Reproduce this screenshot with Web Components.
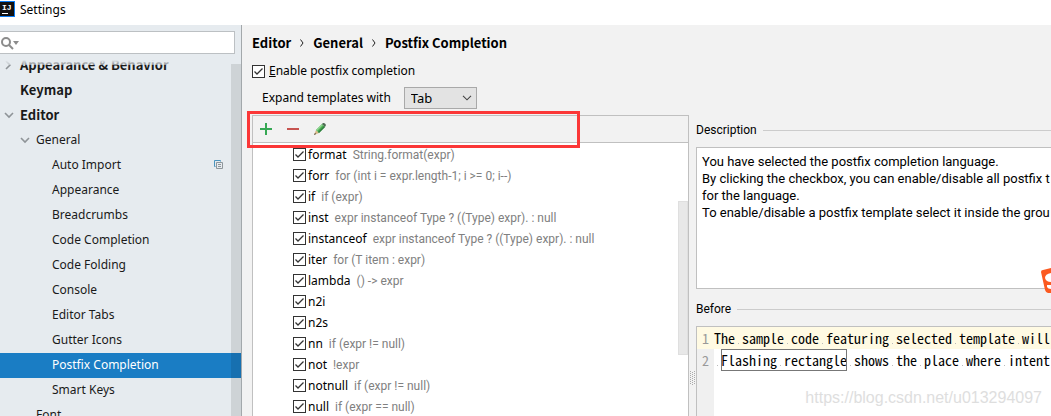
<!DOCTYPE html>
<html lang="en">
<head>
<meta charset="utf-8">
<title>Settings</title>
<style>
  html, body { height: 100%; }
  body {
    margin: 0;
    overflow: hidden;
    color: #111;
    font: 12px/20px "Noto Sans", "Open Sans", sans-serif;
    --heading-font: bold 13px/20px "Noto Sans CJK SC", "Noto Sans", sans-serif;
    --narrow-font: Roboto, "Liberation Sans", sans-serif;
    --code-font: "Noto Sans Mono CJK SC", "Liberation Mono", monospace;
    --line: #c0c0c0;
    --panel: #f2f2f2;
  }
</style>
</head>
<body>
<settings-window>
  <title-bar slot="title">Settings</title-bar>

  <settings-sidebar slot="sidebar">
    <tree-item level="0" state="closed">Appearance &amp; Behavior</tree-item>
    <tree-item level="0">Keymap</tree-item>
    <tree-item level="0" state="open">Editor</tree-item>
    <tree-item level="1" state="open">General</tree-item>
    <tree-item level="2" project>Auto Import</tree-item>
    <tree-item level="2">Appearance</tree-item>
    <tree-item level="2">Breadcrumbs</tree-item>
    <tree-item level="2">Code Completion</tree-item>
    <tree-item level="2">Code Folding</tree-item>
    <tree-item level="2">Console</tree-item>
    <tree-item level="2">Editor Tabs</tree-item>
    <tree-item level="2">Gutter Icons</tree-item>
    <tree-item level="2" selected>Postfix Completion</tree-item>
    <tree-item level="2">Smart Keys</tree-item>
    <tree-item level="1">Font</tree-item>
  </settings-sidebar>

  <bread-crumbs slot="header" path="Editor/General/Postfix Completion"></bread-crumbs>
  <postfix-options slot="header"></postfix-options>

  <template-panel slot="list">
    <template-row name="format" hint="String.format(expr)"></template-row>
    <template-row name="forr" hint="for (int i = expr.length-1; i &gt;= 0; i--)"></template-row>
    <template-row name="if" hint="if (expr)"></template-row>
    <template-row name="inst" hint="expr instanceof Type ? ((Type) expr). : null"></template-row>
    <template-row name="instanceof" hint="expr instanceof Type ? ((Type) expr). : null"></template-row>
    <template-row name="iter" hint="for (T item : expr)"></template-row>
    <template-row name="lambda" hint="() -&gt; expr"></template-row>
    <template-row name="n2i"></template-row>
    <template-row name="n2s"></template-row>
    <template-row name="nn" hint="if (expr != null)"></template-row>
    <template-row name="not" hint="!expr"></template-row>
    <template-row name="notnull" hint="if (expr != null)"></template-row>
    <template-row name="null" hint="if (expr == null)"></template-row>
  </template-panel>

  <preview-section slot="preview" label="Description">
    <description-box>You have selected the postfix completion language.<br>By clicking the checkbox, you can enable/disable all postfix t<br>for the language.<br>To enable/disable a postfix template select it inside the grou</description-box>
  </preview-section>
  <preview-section slot="preview" label="Before" grow>
    <code-sample></code-sample>
  </preview-section>

  <page-mark slot="overlay">https://blog.csdn.net/u013294097</page-mark>
</settings-window>

<script>
  class BaseElement extends HTMLElement {
    connectedCallback() {
      if (this.shadowRoot) return;
      this.attachShadow({ mode: "open" });
      this.shadowRoot.innerHTML = `
        <style>*, :host { box-sizing: border-box; } ${this.styles()}</style>
        ${this.render()}
      `;
    }

    styles() {
      return "";
    }

    render() {
      return "<slot></slot>";
    }
  }

  const CHECKBOX_STYLE = `
    input[type="checkbox"] {
      appearance: none;
      flex: none;
      width: 13px;
      height: 13px;
      margin: 0;
      border: 1px solid #333;
      background: #fff url("data:image/svg+xml,%3Csvg xmlns='http://www.w3.org/2000/svg' viewBox='0 0 11 11'%3E%3Cpath d='M1.5 5.5L4 8l5.5-5.5' fill='none' stroke='%23333' stroke-width='1.3'/%3E%3C/svg%3E") center / 11px 11px no-repeat;
    }
    input[type="checkbox"]:not(:checked) { background-image: none; }
  `;

  class SettingsWindow extends BaseElement {
    styles() {
      return `
        :host {
          display: flex;
          flex-direction: column;
          position: relative;
          height: 100%;
          background: var(--panel);
          overflow: hidden;
        }
        .body { display: flex; flex: 1; min-height: 0; }
        main { display: flex; flex-direction: column; flex: 1; min-width: 0; padding: 8px 0 0 10px; }
        .split {
          display: grid;
          grid-template-columns: 437fr 7px 355fr;
          flex: 1;
          min-height: 0;
        }
        .grip { display: block; align-self: end; justify-self: center; margin-bottom: 31px; }
        .preview { display: flex; flex-direction: column; min-width: 0; min-height: 0; padding-top: 5px; }
      `;
    }

    render() {
      const dots = [0, 1, 2, 3, 4, 5, 6]
        .map((i) => `<path d="M0 ${i * 2 + 0.5}h1M2 ${i * 2 + 1.5}h1M4 ${i * 2 + 0.5}h1" />`)
        .join("");
      return `
        <slot name="title"></slot>
        <div class="body">
          <slot name="sidebar"></slot>
          <main>
            <slot name="header"></slot>
            <div class="split">
              <slot name="list"></slot>
              <svg class="grip" width="5" height="14" stroke="#aaa">${dots}</svg>
              <div class="preview"><slot name="preview"></slot></div>
            </div>
          </main>
        </div>
        <slot name="overlay"></slot>
      `;
    }
  }

  class TitleBar extends BaseElement {
    styles() {
      return `
        :host { display: flex; flex: none; gap: 5px; height: 25px; background: #fff; color: #000; }
        svg { margin-top: 1px; }
        text { font: bold 8px "Liberation Mono", monospace; fill: #fff; }
      `;
    }

    render() {
      return `
        <svg width="15" height="16" aria-hidden="true">
          <rect width="15" height="16" fill="#0a7cf5" />
          <rect width="14" height="14" y="1" fill="#111" />
          <text x="2" y="9">IJ</text>
          <path d="M2 12.5h6" stroke="#fff" />
        </svg>
        <span><slot></slot></span>
      `;
    }
  }

  class SettingsSidebar extends BaseElement {
    styles() {
      return `
        :host {
          display: flex;
          flex-direction: column;
          flex: 0 0 242px;
          border-right: 1px solid #a3a8ab;
          background: #e6ebef;
        }
        .search {
          display: flex;
          align-items: center;
          flex: none;
          height: 23px;
          margin: 6px 6px 6px 0;
          border: 1px solid #bcc0c3;
          border-left: 0;
          background: #fff;
        }
        .search svg { flex: none; }
        input { flex: 1; min-width: 0; height: 100%; padding: 0 4px; border: 0; outline: 0; background: none; font: inherit; }
        .tree { position: relative; flex: 1; min-height: 0; overflow: hidden; }
        nav { margin-top: -7px; }
        .fade { position: absolute; top: 0; left: 0; right: 0; height: 5px; background: linear-gradient(#e6ebef, #e6ebef88); }
        .thumb { position: absolute; top: 4px; right: 0; bottom: 0; width: 10px; background: #0000001a; }
      `;
    }

    render() {
      return `
        <label class="search">
          <svg width="20" height="20" fill="none" stroke="#8c8c8c" stroke-width="2" aria-hidden="true">
            <circle cx="6" cy="9" r="4" />
            <path d="M9 12l4 4" />
            <path d="M13 8h6l-3 4z" fill="#8c8c8c" stroke="none" />
          </svg>
          <input type="text" aria-label="Search settings">
        </label>
        <div class="tree">
          <nav><slot></slot></nav>
          <div class="fade"></div>
          <div class="thumb"></div>
        </div>
      `;
    }
  }

  class TreeItem extends BaseElement {
    styles() {
      return `
        :host { display: block; }
        a {
          display: flex;
          align-items: center;
          height: 25px;
          padding: 0 17px 2px 4px;
          color: #1a1a1a;
          text-decoration: none;
          white-space: nowrap;
        }
        :host([level="0"]) a { font: var(--heading-font); }
        :host([level="1"]) a { padding-left: 20px; }
        :host([level="2"]) a { padding-left: 36px; }
        :host([selected]) a { background: #1a7dc4; color: #fff; }
        .arrow { flex: none; width: 16px; height: 10px; }
        .label { flex: 1; }
      `;
    }

    render() {
      const state = this.getAttribute("state");
      const arrows = {
        open: "M1 3l4 4 4-4",
        closed: "M2 1l4 4-4 4",
      };
      const arrow = arrows[state] ? `<path d="${arrows[state]}" />` : "";
      const project = this.hasAttribute("project")
        ? `<svg width="10" height="10" fill="none" aria-hidden="true">
            <path d="M1.5 6.5H.5V.5h6v1" stroke="#4a93bd" />
            <path d="M2.5 2.5h6v6h-6zM4 4.5h3M4 6.5h3" stroke="#8f969b" />
          </svg>`
        : "";
      return `
        <a href="#">
          <svg class="arrow" fill="none" stroke="#8f9498" stroke-width="1.6" aria-hidden="true">${arrow}</svg>
          <span class="label"><slot></slot></span>
          ${project}
        </a>
      `;
    }
  }

  class BreadCrumbs extends BaseElement {
    styles() {
      return `
        :host { display: flex; gap: 9px; color: #000; font: var(--heading-font); }
        svg { align-self: center; }
      `;
    }

    render() {
      return this.getAttribute("path")
        .split("/")
        .map((part) => `<span>${part}</span>`)
        .join(`<svg width="4" height="8" fill="none" stroke="#222" aria-hidden="true"><path d="M.5 .5L3 4 .5 7.5" /></svg>`);
    }
  }

  class PostfixOptions extends BaseElement {
    styles() {
      return `
        :host { display: block; padding: 8px 0 6px; color: #000; }
        .enable { display: flex; align-items: center; gap: 4px; }
        .expand { display: flex; align-items: center; gap: 13px; margin: 6px 0 0 10px; }
        select {
          appearance: none;
          width: 73px;
          height: 22px;
          padding: 0 6px;
          border: 1px solid #a9a9a9;
          border-radius: 0;
          background: #e3e3e3 url("data:image/svg+xml,%3Csvg xmlns='http://www.w3.org/2000/svg' viewBox='0 0 10 6'%3E%3Cpath d='M1 .8l4 4 4-4' fill='none' stroke='%23444' stroke-width='1.1'/%3E%3C/svg%3E") right 4px center / 10px 6px no-repeat;
          color: #000;
          font: inherit;
        }
        .enable label, select { font: 13px/20px "Noto Sans", sans-serif; }
        .enable label { font-size: 12px; }
        ${CHECKBOX_STYLE}
      `;
    }

    render() {
      return `
        <div class="enable">
          <input type="checkbox" id="enable" checked>
          <label for="enable"><u>E</u>nable postfix completion</label>
        </div>
        <div class="expand">
          <label for="key">Expand templates with</label>
          <select id="key"><option>Tab</option></select>
        </div>
      `;
    }
  }

  class TemplatePanel extends BaseElement {
    styles() {
      return `
        :host {
          display: flex;
          flex-direction: column;
          min-width: 0;
          min-height: 0;
          border: 1px solid var(--line);
          border-bottom: 0;
        }
        .toolbar {
          display: flex;
          align-items: center;
          gap: 11px;
          position: relative;
          flex: none;
          height: 27px;
          padding-left: 5px;
          border-bottom: 1px solid var(--line);
        }
        button { display: flex; width: 16px; height: 16px; padding: 0; border: 0; background: none; }
        .mark {
          position: absolute;
          top: -5px;
          left: -6px;
          width: 333px;
          height: 37px;
          border: 3px solid #fb3737;
          z-index: 1;
          pointer-events: none;
        }
        .list { position: relative; flex: 1; min-height: 0; padding: 1px 0 0 40px; background: #fff; overflow: hidden; }
        .thumb { position: absolute; top: 58px; right: 0; width: 10px; height: 154px; border: 1px solid #dfdfdf; background: #e8e8e8; }
      `;
    }

    render() {
      return `
        <div class="toolbar">
          <button type="button" aria-label="Add">
            <svg width="16" height="16"><path d="M8 2v12M2 8h12" stroke="#36a854" stroke-width="2" /></svg>
          </button>
          <button type="button" aria-label="Remove">
            <svg width="16" height="16"><path d="M2 8h12" stroke="#c75450" stroke-width="2" /></svg>
          </button>
          <button type="button" aria-label="Edit">
            <svg width="16" height="16">
              <path d="M2 14l2-5 3 3z" fill="#d9b98a" />
              <path d="M2 14l1-2 1 1z" fill="#333" />
              <path d="M4 9l6-6 3 3-6 6z" fill="#4caf50" />
              <path d="M4 9l6-6 1 1-6 6z" fill="#8fd694" />
              <path d="M6 11l6-6 1 1-6 6z" fill="#2e7d40" />
              <path d="M10 3l1-1q2-.5 3 2l-1 2z" fill="#4d6b52" />
            </svg>
          </button>
          <div class="mark"></div>
        </div>
        <div class="list">
          <slot></slot>
          <div class="thumb"></div>
        </div>
      `;
    }
  }

  class TemplateRow extends BaseElement {
    styles() {
      return `
        :host { display: block; }
        label { display: flex; align-items: center; gap: 2px; height: 21px; color: #000; white-space: nowrap; }
        .name { margin-right: 4px; }
        .hint { color: #808080; font-family: var(--narrow-font); }
        ${CHECKBOX_STYLE}
      `;
    }

    render() {
      const hint = this.getAttribute("hint") || "";
      return `
        <label>
          <input type="checkbox" checked>
          <span class="name">${this.getAttribute("name")}</span>
          <span class="hint">${hint.replace(/</g, "&lt;")}</span>
        </label>
      `;
    }
  }

  class PreviewSection extends BaseElement {
    styles() {
      return `
        :host { display: flex; flex-direction: column; flex: none; margin-bottom: 10px; }
        :host([grow]) { flex: 1; min-height: 0; margin-bottom: 0; }
        .heading { display: flex; align-items: center; gap: 6px; height: 20px; margin-bottom: 7px; color: #000; font: 12px/20px var(--narrow-font); }
        .heading::after { content: ""; flex: 1; height: 1px; background: #ccc; }
      `;
    }

    render() {
      return `<div class="heading">${this.getAttribute("label")}</div><slot></slot>`;
    }
  }

  class DescriptionBox extends BaseElement {
    styles() {
      return `
        :host {
          display: block;
          min-height: 142px;
          padding: 5px;
          border: 1px solid var(--line);
          border-right: 0;
          background: #fff;
          color: #000;
          font: 13px/17px var(--narrow-font);
          white-space: nowrap;
          overflow: hidden;
        }
      `;
    }
  }

  class CodeSample extends BaseElement {
    styles() {
      return `
        :host {
          display: flex;
          flex-direction: column;
          flex: 1;
          border: 1px solid var(--line);
          border-right: 0;
          border-bottom: 0;
          background: linear-gradient(90deg, #f0f0f0 17px, #fff 17px);
          color: #000;
          font: 14px/22px var(--code-font);
          overflow: hidden;
        }
        .line { display: flex; height: 22px; white-space: pre; }
        .line.current { background: #fffae3; }
        .number { flex: none; width: 17px; padding-left: 5px; color: #999; }
        .space { background: linear-gradient(#bbb, #bbb) 3px 15px / 1px 1px no-repeat; }
        .box { outline: 1px solid #777; outline-offset: -1px; }
      `;
    }

    /* visible whitespace: one small dot for each space */
    _dots(text) {
      return text.replace(/ /g, '<span class="space"> </span>');
    }

    render() {
      return `
        <div class="line current"><span class="number">1</span><span>${this._dots("The sample code featuring selected template will")}</span></div>
        <div class="line"><span class="number">2</span><span>${this._dots(" ")}</span><span class="box">${this._dots("Flashing rectangle")}</span><span>${this._dots(" shows the place where intent")}</span></div>
      `;
    }
  }

  class PageMark extends BaseElement {
    styles() {
      return `
        :host {
          position: absolute;
          inset: 0;
          color: #dedede;
          font: 16px/20px "Liberation Sans", sans-serif;
          pointer-events: none;
        }
        span { position: absolute; right: 9px; bottom: 8px; }
        svg { position: absolute; right: 0; top: 268px; }
      `;
    }

    render() {
      return `
        <span><slot></slot></span>
        <svg width="10" height="26" aria-hidden="true">
          <path d="M0 4Q0 2 2 2L10 0V25H7Q5 25 4 22Z" fill="#fb5a20" />
          <path d="M10 5Q4 6 4 10Q5 14 10 14Z" fill="#fff" />
          <path d="M10 17H6V19Q7 21 10 21Z" fill="#fff" />
        </svg>
      `;
    }
  }

  customElements.define("settings-window", SettingsWindow);
  customElements.define("title-bar", TitleBar);
  customElements.define("settings-sidebar", SettingsSidebar);
  customElements.define("tree-item", TreeItem);
  customElements.define("bread-crumbs", BreadCrumbs);
  customElements.define("postfix-options", PostfixOptions);
  customElements.define("template-panel", TemplatePanel);
  customElements.define("template-row", TemplateRow);
  customElements.define("preview-section", PreviewSection);
  customElements.define("description-box", DescriptionBox);
  customElements.define("code-sample", CodeSample);
  customElements.define("page-mark", PageMark);
</script>
</body>
</html>
